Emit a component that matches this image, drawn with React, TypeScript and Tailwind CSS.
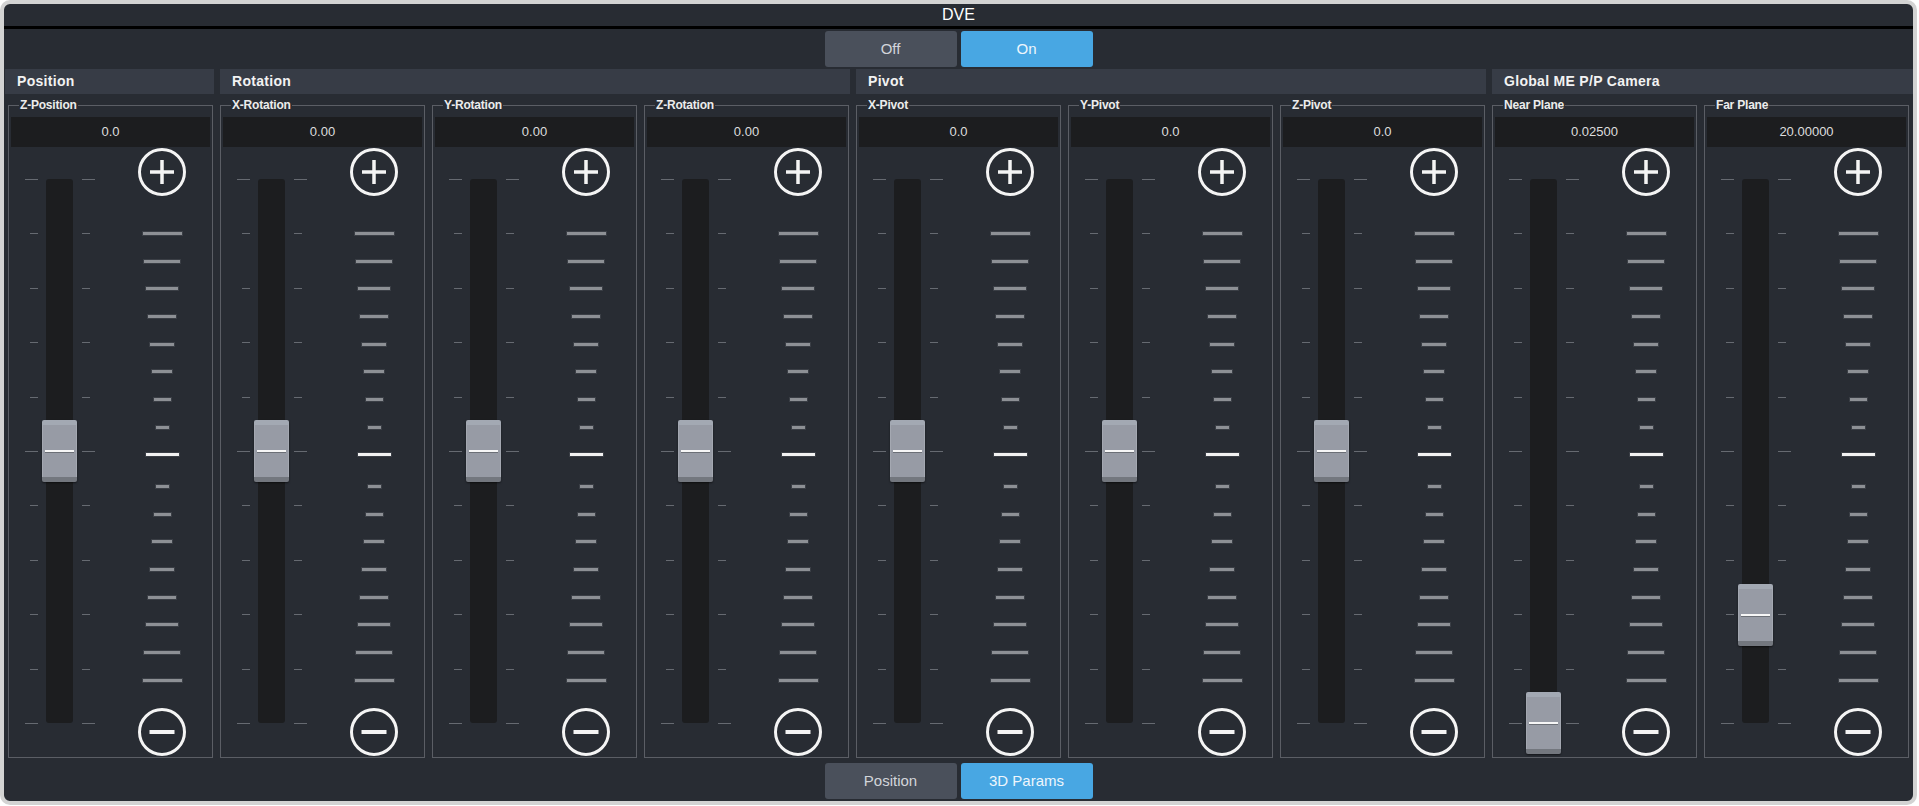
import React from 'react';

const RIGHT_UPPER = [39, 36, 32, 28, 24, 20, 17, 13];
const RIGHT_LOWER = [13, 17, 20, 24, 28, 32, 36, 39];
const LEFT_TICKS = [13, 8, 8, 8, 8, 13, 8, 8, 8, 8, 13];

const TRACK_H = 544;

type FaderProps = { label: string; value: string; pos: number };

const PlusIcon = () => (
  <svg width="48" height="48" viewBox="0 0 48 48">
    <circle cx="24" cy="24" r="22.5" fill="none" stroke="#f4f4f4" strokeWidth="3" />
    <line x1="12" y1="24" x2="36" y2="24" stroke="#f4f4f4" strokeWidth="3.5" />
    <line x1="24" y1="12" x2="24" y2="36" stroke="#f4f4f4" strokeWidth="3.5" />
  </svg>
);

const MinusIcon = () => (
  <svg width="48" height="48" viewBox="0 0 48 48">
    <circle cx="24" cy="24" r="22.5" fill="none" stroke="#f4f4f4" strokeWidth="3" />
    <line x1="11.5" y1="24" x2="36.5" y2="24" stroke="#f4f4f4" strokeWidth="4" />
  </svg>
);

const ScaleTick = ({ w, white }: { w: number; white?: boolean }) => (
  <div
    className={`h-[3px] ${white ? 'bg-[#f2f2f2]' : 'bg-[#8d9095]'} shadow-[0_0_0_1px_#3a3e45]`}
    style={{ width: w }}
  />
);

const Fader = ({ label, value, pos }: FaderProps) => {
  return (
    <div className="relative w-[205px] h-[653px] border border-[#5b5e65]">
      <span className="absolute -top-[9px] left-[10px] bg-[#282c33] px-[1px] text-[12px] leading-[16px] font-bold text-[#ececec] tracking-[-0.2px]">
        {label}
      </span>
      <div className="mx-[2px] mt-[11px] h-[30px] bg-[#1c1d1f] flex items-center justify-center text-[13px] text-[#dedede]">
        {value}
      </div>
      <div className="flex">
        {/* track + side ticks */}
        <div className="ml-[16px] mt-[32px] flex gap-[8px]">
          <div className="flex flex-col justify-between items-end w-[13px] h-[545px]">
            {LEFT_TICKS.map((w, i) => (
              <div key={i} className="h-px bg-[#666a71]" style={{ width: w }} />
            ))}
          </div>
          <div className="relative w-[27px] h-[544px] rounded-[3px] bg-[#1c1d1f]">
            <div
              className="absolute left-[-4px] w-[35px] h-[62px] flex flex-col rounded-[2px] overflow-hidden shadow-[0_1px_2px_rgba(0,0,0,0.5)]"
              style={{ top: pos * TRACK_H - 31 }}
            >
              <div className="h-[5px] bg-[#a3a9b3]" />
              <div className="flex-1 bg-[#979ba5] border-x border-[#a4a8b1]" />
              <div className="h-[5px] bg-[#73777e]" />
              <div className="absolute top-[30px] left-[3px] w-[29px] h-[2px] bg-[#f6f6f6] shadow-[0_1px_0_#6b6f76]" />
            </div>
          </div>
          <div className="ml-[1px] flex flex-col justify-between items-start w-[13px] h-[545px]">
            {LEFT_TICKS.map((w, i) => (
              <div key={i} className="h-px bg-[#666a71]" style={{ width: w }} />
            ))}
          </div>
        </div>
        {/* buttons + scale */}
        <div className="ml-[43px] w-[48px] flex flex-col items-center">
          <div className="mt-[1px]">
            <PlusIcon />
          </div>
          <div className="mt-[36px] flex flex-col items-center gap-[24.7px]">
            {RIGHT_UPPER.map((w, i) => (
              <ScaleTick key={i} w={w} />
            ))}
          </div>
          <div className="mt-[24px]">
            <ScaleTick w={33} white />
          </div>
          <div className="mt-[29px] flex flex-col items-center gap-[24.7px]">
            {RIGHT_LOWER.map((w, i) => (
              <ScaleTick key={i} w={w} />
            ))}
          </div>
          <div className="mt-[26px]">
            <MinusIcon />
          </div>
        </div>
      </div>
    </div>
  );
};

const sections = [
  {
    title: 'Position',
    width: 'w-[209px] pl-[3px]',
    faders: [{ label: 'Z-Position', value: '0.0', pos: 0.5 }],
  },
  {
    title: 'Rotation',
    width: 'w-[630px]',
    faders: [
      { label: 'X-Rotation', value: '0.00', pos: 0.5 },
      { label: 'Y-Rotation', value: '0.00', pos: 0.5 },
      { label: 'Z-Rotation', value: '0.00', pos: 0.5 },
    ],
  },
  {
    title: 'Pivot',
    width: 'w-[630px]',
    faders: [
      { label: 'X-Pivot', value: '0.0', pos: 0.5 },
      { label: 'Y-Pivot', value: '0.0', pos: 0.5 },
      { label: 'Z-Pivot', value: '0.0', pos: 0.5 },
    ],
  },
  {
    title: 'Global ME P/P Camera',
    width: 'w-[421px]',
    faders: [
      { label: 'Near Plane', value: '0.02500', pos: 1 },
      { label: 'Far Plane', value: '20.00000', pos: 0.8015 },
    ],
  },
];

const Toggle = ({ left, right }: { left: string; right: string }) => (
  <div className="flex justify-center gap-[4px]">
    <button className="w-[132px] h-[36px] rounded-[3px] bg-[#4a505b] text-[15px] text-[#d2d5da]">
      {left}
    </button>
    <button className="w-[132px] h-[36px] rounded-[3px] bg-[#48a7e3] text-[15px] text-[#eef6fc]">
      {right}
    </button>
  </div>
);

export default function App() {
  return (
    <div
      className="w-[1917px] h-[805px] border-[4px] border-[#d3d3d3] rounded-[10px] bg-[#282c33] overflow-hidden flex flex-col"
      style={{ fontFamily: '"Liberation Sans", Arial, sans-serif' }}
    >
      <div className="h-[22px] flex items-center justify-center text-[16px] text-white">DVE</div>
      <div className="h-[3px] bg-black" />
      <div className="mt-[2px]">
        <Toggle left="Off" right="On" />
      </div>
      <div className="mt-[2px] pl-[1px] flex gap-[6px]">
        {sections.map((s) => (
          <div key={s.title} className="flex flex-col">
            <div className={`h-[25px] bg-[#373c46] flex items-center pl-[12px] text-[14px] font-bold text-[#f2f2f2] tracking-[0.3px] ${s.width.includes('209') ? 'w-[209px]' : s.width}`}>
              {s.title}
            </div>
            <div className={`mt-[11px] flex gap-[7px] ${s.width.includes('209') ? 'pl-[3px]' : ''}`}>
              {s.faders.map((f) => (
                <Fader key={f.label} {...f} />
              ))}
            </div>
          </div>
        ))}
      </div>
      <div className="mt-[5px]">
        <Toggle left="Position" right="3D Params" />
      </div>
    </div>
  );
}
